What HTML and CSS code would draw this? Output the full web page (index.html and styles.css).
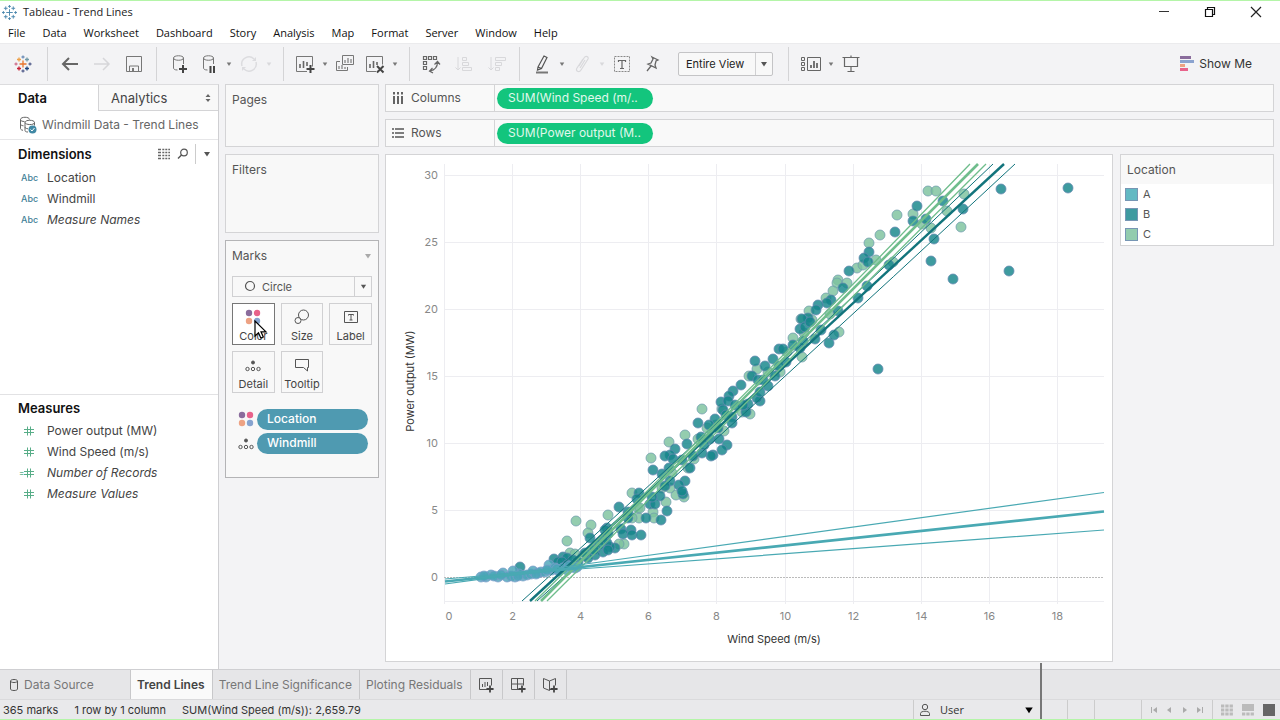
FILE: index.html
```html
<!DOCTYPE html>
<html lang="en">
<head>
<meta charset="utf-8">
<title>Tableau - Trend Lines</title>
<link rel="stylesheet" href="styles.css">
</head>
<body>
<svg class="defs" aria-hidden="true">
  <symbol id="caret" viewBox="0 0 8 8"><path d="M1 2h6L4 6.500z" fill="currentColor"/></symbol>
  <symbol id="plus" viewBox="0 0 9 9"><path d="M4.500 0.500v8M0.500 4.500h8" stroke="#444" stroke-width="2"/></symbol>
  <symbol id="dots4" viewBox="0 0 16 16"><circle cx="4" cy="4" r="3.200" fill="#8a6c9c"/><circle cx="12" cy="4" r="3.200" fill="#e8638b"/><circle cx="4" cy="12" r="3.200" fill="#eda283"/><circle cx="12" cy="12" r="3.200" fill="#86a3cf"/></symbol>
  <symbol id="detail" viewBox="0 0 16 12"><g fill="none" stroke="#555"><circle cx="8" cy="2.500" r="1.500" fill="#555"/><circle cx="2.500" cy="9" r="1.700"/><circle cx="8" cy="9" r="1.700"/><circle cx="13.500" cy="9" r="1.700"/></g></symbol>
  <symbol id="hash" viewBox="0 0 10 10"><path d="M3.500 0.500v9M6.500 0.500v9M0 3.500h10M0 6.500h10" stroke="#58ad88" fill="none"/></symbol>
</svg>
<div class="app">
  <header class="titlebar">
    <svg class="logo" viewBox="0 0 16 16"><path d="M8 4.500v7M4.500 8h7M4 1.500v4M2 3.500h4M12 1.500v4M10 3.500h4M4 10.500v4M2 12.500h4M12 10.500v4M10 12.500h4M8 0v3M6.500 1.500h3M8 13v3M6.500 14.500h3M1.500 6.500v3M0 8h3M14.500 6.500v3M13 8h3" stroke="#4a86ad" fill="none"/></svg>
    <span class="title">Tableau - Trend Lines</span>
    <div class="winctl">
      <button aria-label="Minimize"><svg viewBox="0 0 12 12"><path d="M1 5.500h10" stroke="#333" fill="none"/></svg></button>
      <button aria-label="Restore"><svg viewBox="0 0 12 12"><path d="M1.500 3.500h7v7h-7zM3.500 3.500v-2h7v7h-2" stroke="#111" fill="none" stroke-width="1.200"/></svg></button>
      <button aria-label="Close"><svg viewBox="0 0 12 12"><path d="M1 1l10 10M11 1L1 11" stroke="#222" fill="none" stroke-width="1.200"/></svg></button>
    </div>
  </header>
  <nav class="menubar">
    <button>File</button><button>Data</button><button>Worksheet</button><button>Dashboard</button><button>Story</button><button>Analysis</button><button>Map</button><button>Format</button><button>Server</button><button>Window</button><button>Help</button>
  </nav>
  <div class="toolbar">
    <div class="group g-logo">
      <button class="tool" aria-label="Start"><svg viewBox="0 0 20 20" fill="none" stroke-width="1.300"><path d="M10 6.500v7M6.500 10h7" stroke="#e8762d"/><path d="M6 3.500v4M4 5.500h4" stroke="#eda14a"/><path d="M14 3.500v4M12 5.500h4" stroke="#7199a6"/><path d="M6 12.500v4M4 14.500h4" stroke="#c72035"/><path d="M14 12.500v4M12 14.500h4" stroke="#1f457e"/><path d="M10 1.500v3M8.500 3h3" stroke="#7090b8"/><path d="M10 15.500v3M8.500 17h3" stroke="#5b6591"/><path d="M3 8.500v3M1.500 10h3" stroke="#d0758f"/><path d="M17 8.500v3M15.500 10h3" stroke="#5b6591"/></svg></button>
    </div>
    <div class="group g-nav">
      <button class="tool" aria-label="Undo"><svg viewBox="0 0 20 20"><path d="M18 10H3M9 4l-6 6 6 6" fill="none" stroke="#666" stroke-width="2"/></svg></button>
      <button class="tool" aria-label="Redo"><svg viewBox="0 0 20 20"><path d="M2 10h15M11 4l6 6-6 6" fill="none" stroke="#d6d6d9" stroke-width="1.500"/></svg></button>
      <button class="tool" aria-label="Save"><svg viewBox="0 0 20 20"><path d="M2.500 2.500h15v15h-15zM5.500 17v-5h9v5" fill="none" stroke="#777"/><path d="M8 14h2v3H8z" fill="#777"/></svg></button>
    </div>
    <div class="group g-data">
      <button class="tool" aria-label="New Data Source"><svg viewBox="0 0 20 20"><path d="M4.500 4v10c0 1 1 2 4 2M14.500 4v6M4.500 4c0-3 10-3 10 0s-10 3-10 0" fill="none" stroke="#777"/><use href="#plus" x="9.500" y="10.500" width="9" height="9"/></svg></button>
      <button class="tool" aria-label="Pause Updates"><svg viewBox="0 0 20 20"><path d="M4.500 4v10c0 1 1 2 4 2M14.500 4v6M4.500 4c0-3 10-3 10 0s-10 3-10 0" fill="none" stroke="#777"/><path d="M11.500 12v7M15 12v7" stroke="#444" stroke-width="2"/></svg></button>
      <button class="drop" aria-label="Update options"><svg><use href="#caret"/></svg></button>
      <button class="tool" aria-label="Refresh"><svg viewBox="0 0 20 20"><path d="M3 12A7.200 7.200 0 0 1 15 5M17 8a7.200 7.200 0 0 1-12 7" fill="none" stroke="#dcdcdf" stroke-width="1.500"/><path d="M13 7h4V3zM7 13H3v4z" fill="#dcdcdf"/></svg></button>
      <button class="drop off" aria-label="Refresh options"><svg><use href="#caret"/></svg></button>
    </div>
    <div class="group g-sheet">
      <button class="tool" aria-label="New Worksheet"><svg viewBox="0 0 20 20"><path d="M12 17.500H1.500v-15h16v10" fill="none" stroke="#777"/><path d="M5 14v-4M8.500 14V7M12 12V8" stroke="#666" stroke-width="1.600"/><use href="#plus" x="11" y="10.500" width="9" height="9"/></svg></button>
      <button class="drop" aria-label="New options"><svg><use href="#caret"/></svg></button>
      <button class="tool" aria-label="Duplicate"><svg viewBox="0 0 20 20"><path d="M7.500 1.500h11v9h-11zM5 7.500H1.500v9h11V13" fill="none" stroke="#777"/><path d="M10 9V6M13 9V4M16 9V5M4 15v-3M7 15v-4M10 15v-2" stroke="#666"/></svg></button>
      <button class="tool" aria-label="Clear Sheet"><svg viewBox="0 0 20 20"><path d="M11 17.500H1.500v-15h16v8" fill="none" stroke="#777"/><path d="M5 14v-4M8.500 14V7M12 11V8" stroke="#666" stroke-width="1.600"/><path d="M12 12l6.500 6.500M18.500 12L12 18.500" stroke="#444" stroke-width="2"/></svg></button>
      <button class="drop" aria-label="Clear options"><svg><use href="#caret"/></svg></button>
    </div>
    <div class="group g-sort">
      <button class="tool" aria-label="Swap Rows and Columns"><svg viewBox="0 0 20 20"><path d="M2.500 2.500h3v3h-3zM7.500 2.500h3v3h-3zM12.500 2.500h3v3h-3zM2.500 7.500h3v3h-3zM2.500 12.500h3v3h-3zM16.500 8c0 5-2.500 8-7.500 9M13.500 10.500l3-3 2.500 3M11.500 14L8.500 17l3.500 2" fill="none" stroke="#666" stroke-width="1.200"/></svg></button>
      <button class="tool" aria-label="Sort Ascending"><svg viewBox="0 0 20 20"><path d="M4 3v13M1.500 13.500L4 16l2.500-2.500M8.500 3.500h4v3h-4zM8.500 8.500h6v3h-6zM8.500 13.500h9v3h-9z" fill="none" stroke="#d8d8db"/></svg></button>
      <button class="tool" aria-label="Sort Descending"><svg viewBox="0 0 20 20"><path d="M4 3v13M1.500 13.500L4 16l2.500-2.500M8.500 3.500h10v3h-10zM8.500 8.500h6v3h-6zM8.500 13.500h4v3h-4z" fill="none" stroke="#d8d8db"/></svg></button>
    </div>
    <div class="group g-mark">
      <button class="tool" aria-label="Highlight"><svg viewBox="0 0 20 20"><path d="M4 18.500h12" stroke="#777" stroke-width="2"/><path d="M6 13l6-11 3 1.500-5.500 11L5.500 16zM6 13l3.500 1.500" fill="none" stroke="#555" stroke-width="1.200"/></svg></button>
      <button class="drop" aria-label="Highlight options"><svg><use href="#caret"/></svg></button>
      <button class="tool" aria-label="Group"><svg viewBox="0 0 20 20"><path d="M7 12l5-8c2-3 5-1 4 1l-7 11c-2 3-6 1-4-2l6-9M8 14l5-8" fill="none" stroke="#d8d8db" stroke-width="1.200"/></svg></button>
      <button class="drop off" aria-label="Group options"><svg><use href="#caret"/></svg></button>
      <button class="tool" aria-label="Show Mark Labels"><svg viewBox="0 0 20 20"><path d="M2.500 2.500h15v15h-15z" fill="none" stroke="#888" stroke-dasharray="2 1"/><path d="M6.500 8V6.500h7V8M10 6.500v8M8 14.500h4" fill="none" stroke="#666" stroke-width="1.200"/></svg></button>
      <button class="tool" aria-label="Fix Axes"><svg viewBox="0 0 20 20"><path d="M10 3l6 3-2 1-1 4 1 3-8-4 3-1 2-4zM9 12l-4 5" fill="none" stroke="#666" stroke-width="1.300"/></svg></button>
      <span class="fit"><select aria-label="Fit"><option>Entire View</option><option>Standard</option></select><svg><use href="#caret"/></svg></span>
    </div>
    <div class="group g-show">
      <button class="tool wide" aria-label="Show or Hide Cards"><svg viewBox="0 0 22 20"><path d="M1.500 3.500h3v3h-3zM1.500 8.500h3v3h-3zM1.500 13.500h3v3h-3zM7.500 3.500h13v13h-13z" fill="none" stroke="#666"/><path d="M11 14v-3M14 14V7M17 14V9" stroke="#555" stroke-width="1.600"/></svg></button>
      <button class="drop" aria-label="Card options"><svg><use href="#caret"/></svg></button>
      <button class="tool" aria-label="Presentation Mode"><svg viewBox="0 0 20 20"><path d="M1.500 3.500h17M3.500 4v8.500h13V4M10 1.500v2M10 12.500v5M6.500 17.500h7" fill="none" stroke="#666" stroke-width="1.200"/></svg></button>
    </div>
    <button class="showme"><svg viewBox="0 0 16 16"><path d="M1 0h11v3H1z" fill="#8a6c9c"/><path d="M1 4h14v3H1z" fill="#8ba3cf"/><path d="M1 8h5v3H1z" fill="#eda283"/><path d="M1 12h8v3H1z" fill="#e8638b"/></svg>Show Me</button>
  </div>

  <div class="workspace">
    <aside class="datapane">
      <div class="panetabs"><button class="on">Data</button><button class="analytics">Analytics<svg viewBox="0 0 8 10"><path d="M4 1l2.500 3h-5zM4 9l2.500-3h-5z" fill="#666"/></svg></button></div>
      <div class="source"><svg viewBox="0 0 18 18"><path d="M1.500 3.500v9c0 1 1 1.500 2.500 1.800M1.500 3.500c0-3 9-3 9 0M1.500 3.500c0 1.500 2 2 4 2M1.500 8c0 1 1 1.500 3 1.800M6 6.500v8c0 1 1 1.500 3 1.500M6 6.500c0-3 9.500-3 9.500 0s-9.500 2.500-9.500 0M15.500 6.500v3M6 11c0 1 1 1.500 3 1.800" fill="none" stroke="#666"/><circle cx="13.500" cy="13.500" r="4" fill="#4189a5"/><path d="M11.500 13.500l1.500 1.500 2.500-3" fill="none" stroke="#fff"/></svg>Windmill Data - Trend Lines</div>
      <section class="fields dims">
        <header><h2>Dimensions</h2>
          <button aria-label="View Data"><svg viewBox="0 0 12 12"><path d="M0 1.500h12M0 4.500h12M0 7.500h12M0 10.500h12" stroke="#666" stroke-dasharray="3 1.300 2 1 2 1 3" stroke-width="1.300"/></svg></button>
          <button aria-label="Find Field"><svg viewBox="0 0 12 12"><circle cx="7" cy="4.500" r="3.300" fill="none" stroke="#555" stroke-width="1.200"/><path d="M4.500 7L1 10.500" stroke="#555" stroke-width="1.500"/></svg></button>
          <button class="more" aria-label="Menu"><svg><use href="#caret"/></svg></button>
        </header>
        <ul>
          <li><i class="abc">Abc</i>Location</li>
          <li><i class="abc">Abc</i>Windmill</li>
          <li class="it"><i class="abc">Abc</i>Measure Names</li>
        </ul>
      </section>
      <section class="fields meas">
        <header><h2>Measures</h2></header>
        <ul>
          <li><svg><use href="#hash"/></svg>Power output (MW)</li>
          <li><svg><use href="#hash"/></svg>Wind Speed (m/s)</li>
          <li class="it calc"><svg><use href="#hash"/></svg>Number of Records</li>
          <li class="it"><svg><use href="#hash"/></svg>Measure Values</li>
        </ul>
      </section>
    </aside>

    <div class="cards">
      <section class="card"><h3>Pages</h3></section>
      <section class="card filters"><h3>Filters</h3></section>
      <section class="card marks">
        <h3>Marks<svg><use href="#caret"/></svg></h3>
        <div class="marktype"><svg class="ring" viewBox="0 0 12 12"><circle cx="6" cy="6" r="4.500" fill="none" stroke="#555" stroke-width="1.200"/></svg><select aria-label="Mark type"><option>Circle</option><option>Square</option></select><svg class="arrow"><use href="#caret"/></svg></div>
        <div class="markgrid">
          <button class="active"><svg viewBox="0 0 16 16"><use href="#dots4"/></svg>Color<svg class="cursor" viewBox="0 0 14 20"><path d="M1 1v15l3.500-3.300 2.300 5.300 2.500-1-2.300-5.200H12z" fill="#fff" stroke="#000" stroke-width="1.200"/></svg></button>
          <button><svg viewBox="0 0 16 16"><circle cx="9.500" cy="6" r="5" fill="none" stroke="#555"/><circle cx="4" cy="11.500" r="3" fill="#f8f8f8" stroke="#555"/></svg>Size</button>
          <button><svg viewBox="0 0 16 16"><path d="M1.500 2.500h13v11h-13z" fill="none" stroke="#555"/><path d="M5.500 6.500v-1h5v1M8 5.500v5.500M6.500 11h3" fill="none" stroke="#555"/></svg>Label</button>
          <button><svg viewBox="0 0 16 16"><use href="#detail" y="3" width="16" height="12"/></svg>Detail</button>
          <button><svg viewBox="0 0 16 16"><path d="M1.500 2.500h13v8h-1v3.500l-4-3.500h-8z" fill="none" stroke="#555"/></svg>Tooltip</button>
        </div>
        <ul class="pills">
          <li><svg viewBox="0 0 16 16"><use href="#dots4"/></svg><button>Location</button></li>
          <li><svg viewBox="0 0 16 16"><use href="#detail" y="3" width="16" height="12"/></svg><button>Windmill</button></li>
        </ul>
      </section>
    </div>

    <main class="sheet">
      <div class="shelf"><span class="name"><svg viewBox="0 0 12 12"><path d="M2 4v8M6 4v8M10 4v8M2 0v2.500M6 0v2.500M10 0v2.500" stroke="#555" stroke-width="1.800"/></svg>Columns</span><button>SUM(Wind Speed (m/..</button></div>
      <div class="shelf"><span class="name"><svg viewBox="0 0 12 12"><path d="M3 2h9M3 6h9M3 10h9M0 2h2M0 6h2M0 10h2" stroke="#555" stroke-width="1.500"/></svg>Rows</span><button>SUM(Power output (M..</button></div>
      <div class="viewrow">
        <div class="view">
          <svg id="chart" viewBox="386 155 726 506" role="img" aria-label="Power output by wind speed with trend lines">
            <g id="grid"></g>
            <g id="points"></g>
            <g fill="none">
              <g stroke="#12747c">
                <path d="M530 601L1004 164" stroke-width="2.400"/>
                <path d="M522 601Q745 400 993 164"/>
                <path d="M537 601Q770 392 1015 164"/>
              </g>
              <g stroke="#6fbd8c">
                <path d="M541 601L978 164" stroke-width="2.600"/>
                <path d="M535 601Q745 397 970 164" stroke-width="1.300"/>
                <path d="M547 601Q765 384 986 164" stroke-width="1.300"/>
              </g>
              <g stroke="#49a9b3">
                <path d="M445 581.500L1104 511.500" stroke-width="2.600"/>
                <path d="M445 579Q530 572 600 562L1104 492.500" stroke-width="1.200"/>
                <path d="M445 584Q530 572 600 567.500L1104 530" stroke-width="1.200"/>
              </g>
            </g>
            <text class="axis" x="774" y="643" text-anchor="middle">Wind Speed (m/s)</text>
            <text class="axis" transform="translate(414 381) rotate(-90)" text-anchor="middle">Power output (MW)</text>
          </svg>
        </div>
        <aside class="legend">
          <h3>Location</h3>
          <ul><li><i class="a"></i>A</li><li><i class="b"></i>B</li><li><i class="c"></i>C</li></ul>
        </aside>
      </div>
    </main>
  </div>

  <footer>
    <nav class="sheets">
      <button class="ds"><svg viewBox="0 0 10 14"><path d="M1.500 3v8c0 2 7 2 7 0V3c0-2-7-2-7 0s7 2 7 0" fill="none" stroke="#555"/></svg>Data Source</button>
      <button class="on">Trend Lines</button>
      <button>Trend Line Significance</button>
      <button>Ploting Residuals</button>
      <button class="new" aria-label="New Worksheet"><svg viewBox="0 0 16 16"><path d="M9 12.500H1.500v-11h12v7" fill="none" stroke="#555"/><path d="M4.500 10V7M7 10V5M9.500 9V5" stroke="#555"/><use href="#plus" x="8" y="8" width="8" height="8"/></svg></button>
      <button class="new" aria-label="New Dashboard"><svg viewBox="0 0 16 16"><path d="M9 12.500H1.500v-11h12v7M1.500 7h12M7.500 1.500v11" fill="none" stroke="#555"/><use href="#plus" x="8" y="8" width="8" height="8"/></svg></button>
      <button class="new" aria-label="New Story"><svg viewBox="0 0 16 16"><path d="M9 12l-1.500 1.500L1.500 11V1.500l6 2.500 6-2.500v7M7.500 4v9" fill="none" stroke="#555"/><use href="#plus" x="8" y="8" width="8" height="8"/></svg></button>
    </nav>
    <div class="status">
      <span>365 marks</span><span>1 row by 1 column</span><span>SUM(Wind Speed (m/s)): 2,659.79</span>
      <button class="user"><svg viewBox="0 0 12 14"><circle cx="6" cy="4" r="2.700" fill="none" stroke="#555"/><path d="M1.500 12.500v-2c0-3 9-3 9 0v2z" fill="none" stroke="#555"/></svg>User<svg class="arrow"><use href="#caret"/></svg></button>
      <i class="cell s"></i><i class="cell s"></i><i class="cell m"></i>
      <div class="pager">
        <button aria-label="First"><svg viewBox="0 0 8 8"><path d="M1.500 1v6" stroke="#aaa"/><path d="M7 1v6L3 4z" fill="#aaa"/></svg></button>
        <button aria-label="Previous"><svg viewBox="0 0 8 8"><path d="M6 1v6L2 4z" fill="#aaa"/></svg></button>
        <button aria-label="Next"><svg viewBox="0 0 8 8"><path d="M2 1v6l4-3z" fill="#aaa"/></svg></button>
        <button aria-label="Last"><svg viewBox="0 0 8 8"><path d="M6.500 1v6" stroke="#aaa"/><path d="M1 1v6l4-3z" fill="#aaa"/></svg></button>
      </div>
      <div class="modes">
        <button aria-label="Sheet sorter"><svg viewBox="0 0 12 12"><path d="M0 2h12M0 6h12M0 10h12" stroke="#bbb" stroke-width="3" stroke-dasharray="3.300 1"/></svg></button>
        <button aria-label="Filmstrip"><svg viewBox="0 0 12 12"><path d="M0 0h12v7H0z" fill="#bbb"/><path d="M0 10h12" stroke="#bbb" stroke-width="3" stroke-dasharray="3.300 1"/></svg></button>
        <button aria-label="Tabs"><svg viewBox="0 0 12 12"><path d="M0 0h12v12H0z" fill="#666"/></svg></button>
      </div>
    </div>
    <i class="edge"></i>
  </footer>
</div>
<script src="chart.js"></script>
</body>
</html>
```
FILE: styles.css
```css
* { box-sizing: border-box; }
body { margin: 0; font: 12px/16px Inter, "Open Sans", sans-serif; color: #555; background: #f3f3f5; }
button, select { font: inherit; color: inherit; background: none; border: 0; padding: 0; margin: 0; }
select { appearance: none; }
h2, h3, ul { margin: 0; padding: 0; font-weight: 400; font-size: inherit; list-style: none; }
svg { display: block; flex: none; }
.defs { position: absolute; width: 0; height: 0; }
i { font-style: normal; }

.app { min-height: 100vh; display: flex; flex-direction: column; border-top: 1px solid #b4f5a8; border-bottom: 1px solid #b4f5a8; }

.titlebar { height: 22px; background: #fff; display: flex; align-items: center; padding: 0 9px 0 2px; font-family: "Open Sans", sans-serif; font-size: 11px; color: #222; }
.logo { width: 15px; height: 15px; margin-right: 6px; }
.winctl { margin-left: auto; display: flex; gap: 16px; }
.winctl button { width: 30px; height: 20px; display: grid; place-items: center; }
.winctl svg { width: 12px; height: 12px; }

.menubar { height: 20px; background: #fff; display: flex; gap: 17px; padding: 0 8px; font-family: "Open Sans", sans-serif; font-size: 11px; color: #111; }

.toolbar { height: 41px; display: flex; align-items: center; border-top: 1px solid #ebebed; }
.group { display: flex; align-items: center; height: 34px; padding: 0 8px; border-right: 1px solid #d4d4d6; }
.g-logo { padding: 0 9px 0 8px; }
.g-nav { padding: 0 7px; gap: 2px; }
.g-data { padding: 0 9px 0 7px; }
.g-sheet { padding: 0 9px 0 6px; }
.g-sort { padding: 0 7px 0 6px; gap: 3px; }
.g-mark { padding: 0 15px 0 7px; }
.g-show { border: 0; padding: 0 7px; }
.tool { width: 30px; height: 30px; display: grid; place-items: center; }
.tool svg { width: 20px; height: 20px; }
.tool.wide svg { width: 22px; }
.drop { width: 10px; height: 30px; display: grid; place-items: center; color: #777; }
.drop svg { width: 6px; height: 6px; }
.drop.off { color: #d8d8db; }
.fit { position: relative; display: flex; margin-left: 11px; }
.fit select { width: 95px; height: 24px; border: 1px solid #c4c4c6; border-radius: 2px; background: linear-gradient(#d0d0d2, #d0d0d2) 76px 0 / 1px 100% no-repeat #f8f8f8; padding-left: 7px; color: #222; font-size: 11px; }
.fit svg { position: absolute; right: 5px; top: 8px; width: 8px; height: 8px; pointer-events: none; color: #555; }
.showme { margin-left: auto; margin-right: 28px; display: flex; align-items: center; gap: 4px; font-size: 12px; color: #333; }
.showme svg { width: 16px; height: 16px; }

.workspace { flex: 1; display: flex; gap: 6px; }
.datapane { width: 219px; background: #fff; border-right: 1px solid #cfcfd2; border-top: 1px solid #dcdcde; display: flex; flex-direction: column; }
.panetabs { display: grid; grid-template-columns: 98px 1fr; height: 26px; }
.panetabs button { text-align: left; padding-left: 18px; font-size: 13px; }
.panetabs .on { font-weight: 600; color: #111; }
.panetabs .analytics { border-left: 1px solid #d4d4d6; border-bottom: 1px solid #d4d4d6; background: #f8f8f8; display: flex; align-items: center; justify-content: space-between; padding: 0 6px 0 12px; color: #444; }
.analytics svg { width: 8px; height: 10px; }
.source { height: 29px; display: flex; align-items: center; gap: 5px; padding-left: 19px; border-bottom: 1px solid #e6e6e8; color: #666; }
.source svg { width: 18px; height: 18px; }
.fields header { height: 27px; display: flex; align-items: center; padding-left: 18px; }
.fields h2 { flex: 1; font-size: 13px; font-weight: 600; color: #111; }
.fields header button { width: 19px; height: 20px; display: grid; place-items: center; }
.fields header svg { width: 12px; height: 12px; }
.fields header .more { width: 23px; border-left: 1px solid #ccc; margin-left: 3px; }
.fields .more svg { width: 8px; height: 8px; }
.fields li { height: 21px; display: flex; align-items: center; color: #444; }
.fields li svg { width: 10px; height: 10px; margin: 0 13px 0 24px; }
.fields .it { font-style: italic; }
.fields .calc::before { content: "="; font-size: 8px; font-style: normal; color: #58ad88; width: 5px; margin: 0 -24px 0 19px; }
.abc { width: 26px; margin-left: 21px; font-size: 9px; font-weight: 500; font-style: normal; color: #3f7f97; }
.dims { height: 254px; }
.meas { flex: 1; border-top: 1px solid #e2e2e4; }
.meas header { height: 25px; }

.cards { width: 154px; display: flex; flex-direction: column; gap: 7px; }
.card { background: #f8f8f8; border: 1px solid #d4d4d6; padding: 7px 6px; height: 63px; }
.card.filters { height: 79px; }
.card.marks { height: 238px; border-color: #b4b4b6; }
.marks h3 { display: flex; justify-content: space-between; align-items: center; }
.marks h3 svg { width: 8px; height: 8px; color: #aaa; }
.marktype { position: relative; display: flex; margin: 12px 0 6px; }
.marktype select { width: 100%; height: 21px; border: 1px solid #d0d0d2; padding-left: 29px; background: #f8f8f8; font-size: 11px; }
.marktype .ring { position: absolute; left: 12px; top: 4px; width: 12px; height: 12px; }
.marktype .arrow { position: absolute; right: 0; top: 1px; width: 18px; height: 19px; padding: 5px; border-left: 1px solid #d0d0d2; pointer-events: none; }
.markgrid { display: grid; grid-template-columns: repeat(3, 1fr); gap: 6px; }
.markgrid button { position: relative; height: 42px; border: 1px solid #d0d0d2; font-size: 11px; line-height: 14px; color: #444; display: flex; flex-direction: column; align-items: center; gap: 4px; padding-top: 5px; }
.markgrid svg { width: 16px; height: 16px; }
.markgrid .active { background: #fff; border-color: #777; }
.markgrid .cursor { position: absolute; left: 21px; top: 16px; width: 14px; height: 20px; z-index: 1; }
.pills { margin-top: 14px; }
.pills li { display: flex; align-items: center; height: 24px; padding: 0 4px 0 6px; gap: 3px; }
.pills svg { width: 16px; height: 16px; }
.pills button { flex: 1; height: 21px; border-radius: 11px; background: #4f9ab1; color: #fff; text-align: left; padding-left: 10px; font-weight: 500; }

.sheet { flex: 1; min-width: 0; display: flex; flex-direction: column; gap: 7px; padding: 0 6px 7px 0; }
.shelf { height: 28px; background: #f9f9f9; border: 1px solid #d4d4d6; display: flex; align-items: center; gap: 2px; }
.shelf .name { width: 109px; height: 100%; border-right: 1px solid #d4d4d6; display: flex; align-items: center; gap: 7px; padding-left: 6px; }
.shelf svg { width: 12px; height: 12px; }
.shelf button { width: 156px; height: 21px; border-radius: 11px; background: #13c57d; color: #e0f8ec; text-align: left; padding-left: 11px; }
.viewrow { flex: 1; display: flex; align-items: flex-start; gap: 7px; }
.view { flex: 1; align-self: stretch; background: #fff; border: 1px solid #d4d4d6; }
.view > svg { width: 100%; height: auto; }
#chart text { font: 11px Inter, sans-serif; fill: #888; }
#chart .axis { fill: #333; }
.legend { width: 154px; background: #fff; border: 1px solid #d4d4d6; padding-bottom: 1px; }
.legend h3 { height: 29px; line-height: 30px; background: #f8f8f8; padding-left: 6px; }
.legend li { height: 20px; display: flex; align-items: center; gap: 5px; padding-left: 4px; font-size: 11px; }
.legend i { width: 13px; height: 13px; border: 1px solid #7796b4; }
.legend .a { background: #62b9c3; }
.legend .b { background: #3f9aa0; }
.legend .c { background: #92ccae; }

footer { position: relative; background: #e6e6e8; }
.sheets { height: 31px; display: flex; border-top: 1px solid #cfcfd2; border-bottom: 1px solid #dadadc; }
.sheets button { padding: 0 7px 0 6px; border-right: 1px solid #c8c8ca; color: #777; }
.sheets .ds { width: 131px; display: flex; align-items: center; gap: 5px; padding-left: 9px; }
.ds svg { width: 10px; height: 14px; }
.sheets .on { background: #fafafa; color: #444; font-weight: 600; }
.sheets .new { width: 32px; display: grid; place-items: center; padding: 0; }
.new svg { width: 16px; height: 16px; }
.status { height: 19px; display: flex; align-items: center; background: #e9e9eb; padding-left: 3px; gap: 16px; font-size: 11px; color: #333; }
.user { margin-left: auto; width: 128px; height: 100%; border-left: 1px solid #ccc; display: flex; align-items: center; gap: 9px; padding: 0 7px 0 5px; font-family: "Open Sans", sans-serif; font-size: 11px; }
.user svg { width: 12px; height: 14px; }
.user .arrow { width: 10px; height: 10px; margin-left: auto; color: #000; }
.status .user, .cell, .pager { margin-right: -16px; }
.cell { height: 100%; border-right: 1px solid #ccc; }
.cell.s { width: 27px; }
.cell.m { width: 47px; }
.pager { width: 71px; height: 100%; display: flex; align-items: center; justify-content: space-around; padding: 0 4px; border-right: 1px solid #ccc; }
.pager svg { width: 8px; height: 8px; }
.modes { width: 67px; display: flex; align-items: center; gap: 9px; padding-left: 8px; }
.modes svg { width: 12px; height: 12px; }
.edge { position: absolute; right: 238px; top: -6px; bottom: 0; width: 2px; background: #777; }
```
FILE: chart.js
```js
const NS = 'http://www.w3.org/2000/svg';
const grid = document.getElementById('grid');
const layer = document.getElementById('points');

function add(parent, tag, attrs, text) {
  const el = document.createElementNS(NS, tag);
  for (const key in attrs) el.setAttribute(key, attrs[key]);
  if (text !== undefined) el.textContent = text;
  parent.appendChild(el);
}

for (let i = 0; i < 10; i++) {
  const x = Math.round(444 + i * 68.1) + 0.5;
  add(grid, 'path', { d: `M${x} 164V604`, stroke: '#ededf1' });
  add(grid, 'text', { x: i ? x : 449, y: 620, 'text-anchor': 'middle' }, i * 2);
}
for (let i = 0; i < 7; i++) {
  const y = 577.5 - i * 67;
  const line = { d: `M444 ${y}H1104`, stroke: i ? '#ededf1' : '#bbb' };
  if (!i) line['stroke-dasharray'] = '2 1';
  add(grid, 'path', line);
  add(grid, 'text', { x: 438, y: y + 3.5, 'text-anchor': 'end' }, i * 5);
}
add(grid, 'path', { d: 'M444 601.5H1104', stroke: '#ededf1' });

const series = [
  { fill: '#7cc29d', stroke: '#6f9cae', pts: '928,191 936,191 964,194 897,215 913,214 947,211 961,227 880,235 869,243 922,224 931,228 876,260 857,268 863,265 893,262 838,280 837,283 847,283 833,291 826,298 809,311 801,319 839,332 793,338 830,314 802,357 780,372 749,376 757,369 722,409 702,409 750,414 724,431 707,428 742,412 685,435 669,442 698,439 651,458 694,459 688,468 672,473 676,495 684,497 666,502 670,488 653,512 654,518 639,518 632,518 632,493 638,508 608,515 624,544 619,544 576,521 591,525 567,541 588,533 570,553 575,554 640,508 662,488 812,320 804,333 787,352 768,372 716,425 595,549 583,556' },
  { fill: '#13858a', stroke: '#6488b0', pts: '1068,188 1001,189 1009,271 953,279 931,261 934,239 963,209 917,206 943,201 913,221 895,232 926,219 869,252 864,258 868,262 849,271 889,265 843,288 867,286 858,298 831,300 827,303 818,305 816,310 838,311 808,318 802,319 800,329 805,327 810,322 821,330 815,339 829,343 834,335 779,349 783,349 793,345 800,348 773,359 878,369 755,361 765,366 752,376 758,380 741,385 733,391 729,396 721,402 728,401 723,410 715,419 698,423 709,425 768,386 760,401 757,398 760,392 746,412 748,404 743,405 732,417 732,423 735,405 701,437 710,439 719,439 727,445 722,450 713,455 711,456 702,453 687,444 693,456 675,449 670,455 665,456 673,459 653,470 662,474 669,468 690,468 682,460 685,481 679,485 670,481 665,486 683,494 682,491 660,496 650,504 655,504 652,497 667,511 661,520 646,518 639,493 637,499 619,507 628,518 628,512 621,529 631,530 623,534 632,535 641,535 615,548 610,547 603,552 607,528 605,530 608,534 607,543 603,540 590,538 554,559 563,557 567,558 595,555 588,558 578,562 558,562 520,567 608,550 599,545 594,550 585,553 573,560 562,562 567,565 775,376 786,362 763,380 803,341 779,366 726,415 718,428 704,445' },
  { fill: '#4aa5b8', stroke: '#7b9cca', pts: '481,577 486,577 491,575 498,577 503,573 507,577 511,576 515,577 519,574 523,576 527,575 531,574 533,571 538,573 541,572 545,572 549,565 552,570 555,568 559,571 563,568 567,570 571,567 575,568 484,576 494,576 501,575 513,571 518,576 536,574 547,570 557,569 569,566 577,567' }
];
for (const s of series) {
  for (const p of s.pts.split(' ')) {
    const [x, y] = p.split(',');
    add(layer, 'circle', { cx: x, cy: y, r: 5, fill: s.fill, 'fill-opacity': 0.82, stroke: s.stroke, 'stroke-opacity': 0.75 });
  }
}
```
